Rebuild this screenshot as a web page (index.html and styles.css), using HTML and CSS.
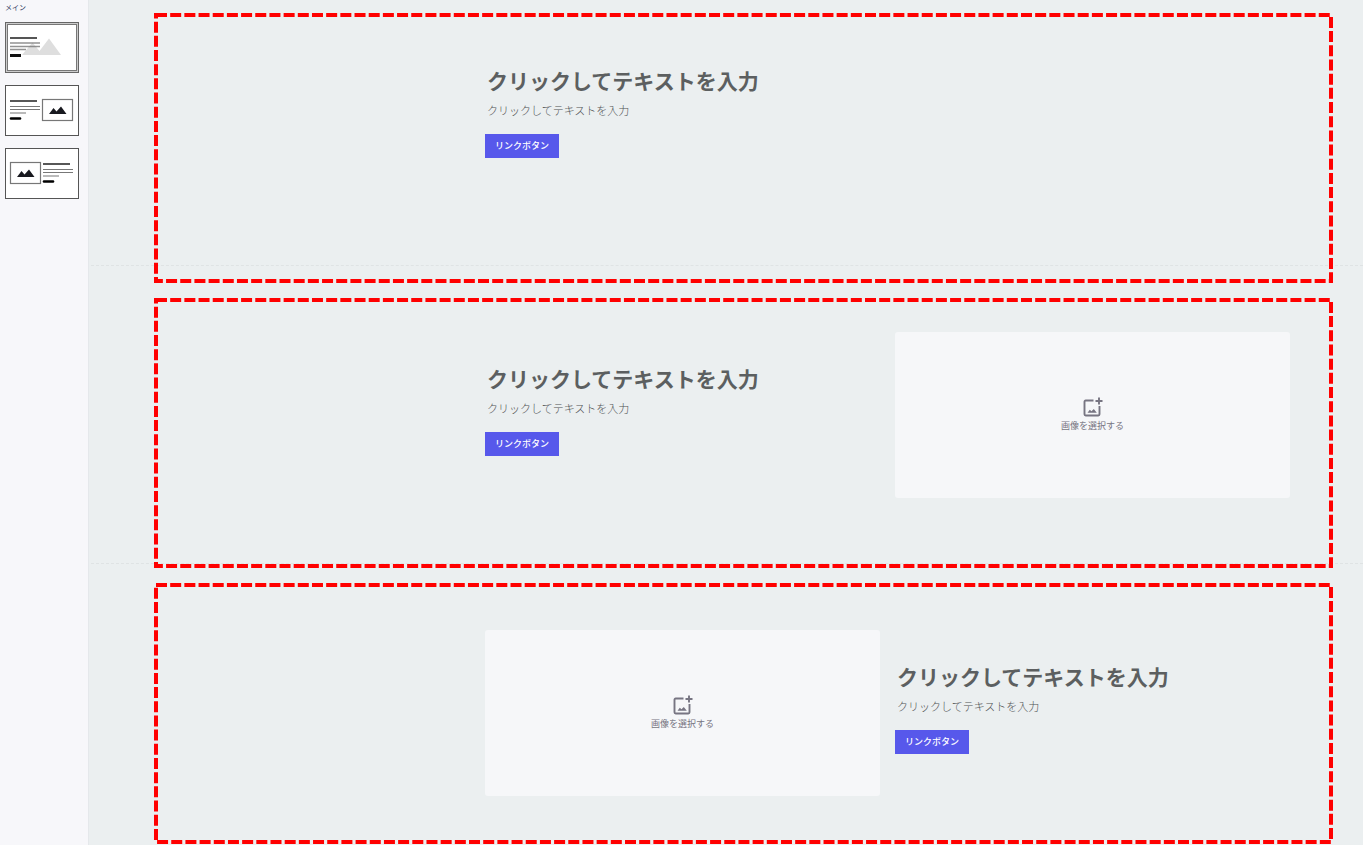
FILE: index.html
```html
<!DOCTYPE html>
<html lang="ja">
<head>
<meta charset="utf-8">
<meta name="viewport" content="width=device-width, initial-scale=1">
<title>メイン</title>
<link rel="stylesheet" href="styles.css">
</head>
<body>
<svg class="defs" aria-hidden="true">
  <symbol id="add-image" viewBox="0 0 20 20">
    <path d="M10.500 3.500H2.700Q1.500 3.500 1.500 4.700V17.300Q1.500 18.500 2.700 18.500H15.300Q16.500 18.500 16.500 17.300V9" fill="none" stroke="currentColor" stroke-width="1.900"/>
    <path d="M16 0.500V7.500M12.500 4H19.500" fill="none" stroke="currentColor" stroke-width="1.900"/>
    <path d="M4.500 15.700L6.800 12.800L8.500 14.300L10.800 12L13.800 15.700Z" fill="currentColor"/>
  </symbol>
</svg>
<div class="app">
  <nav class="sidebar" aria-label="レイアウト">
    <h1 class="sidebar-title">メイン</h1>
    <button class="thumb" type="button" aria-label="背景画像">
      <svg viewBox="0 0 74 51">
        <rect x=".5" y=".5" width="73" height="50" fill="#fff" stroke="#666"/>
        <rect x="1.500" y="1.500" width="71" height="48" fill="none" stroke="#ccc"/>
        <rect x="2.500" y="2.500" width="69" height="46" fill="none" stroke="#777"/>
        <path d="M17 33L27.500 20.500L34.500 29L44 16.500L56 33Z" fill="#dedede"/>
        <path d="M5 16H32" stroke="#555" stroke-width="2"/>
        <path d="M5 21H35M5 24.500H35M5 27.500H21" stroke="#777" stroke-opacity=".8" stroke-width="1.300"/>
        <path d="M5 33.500H16" stroke="#111" stroke-width="3"/>
      </svg>
    </button>
    <button class="thumb" type="button" aria-label="右に画像">
      <svg viewBox="0 0 74 51">
        <rect x=".5" y=".5" width="73" height="50" fill="#fff" stroke="#555"/>
        <path d="M5 16H32" stroke="#444" stroke-width="1.800"/>
        <path d="M5 21.500H35M5 24.500H35M5 28H21" stroke="#777" stroke-width="1.200"/>
        <path d="M6 33.500H15" stroke="#000" stroke-width="2.600" stroke-linecap="round"/>
        <rect x="37.500" y="14.500" width="30" height="21" fill="#fff" stroke="#777" stroke-width="1.200"/>
        <path d="M44 29L48.500 23L51.500 26.500L56 21.500L61.500 29Z" fill="#18191f"/>
      </svg>
    </button>
    <button class="thumb" type="button" aria-label="左に画像">
      <svg viewBox="0 0 74 51">
        <rect x=".5" y=".5" width="73" height="50" fill="#fff" stroke="#555"/>
        <rect x="5.500" y="14.500" width="30" height="21" fill="#fff" stroke="#777" stroke-width="1.200"/>
        <path d="M12 29L16.500 23L19.500 26.500L24 21.500L29.500 29Z" fill="#18191f"/>
        <path d="M38 16H65" stroke="#444" stroke-width="1.800"/>
        <path d="M38 21.500H68M38 24.500H68M38 28H54" stroke="#777" stroke-width="1.200"/>
        <path d="M39 33.500H48" stroke="#000" stroke-width="2.600" stroke-linecap="round"/>
      </svg>
    </button>
  </nav>
  <main class="canvas">
    <section class="block block-first">
      <div class="copy">
        <h2 class="title">クリックしてテキストを入力</h2>
        <p class="text">クリックしてテキストを入力</p>
        <a class="link-button" href="#">リンクボタン</a>
      </div>
    </section>
    <section class="block">
      <div class="copy">
        <h2 class="title">クリックしてテキストを入力</h2>
        <p class="text">クリックしてテキストを入力</p>
        <a class="link-button" href="#">リンクボタン</a>
      </div>
      <button class="picker" type="button"><svg class="picker-icon"><use href="#add-image"/></svg>画像を選択する</button>
    </section>
    <section class="block">
      <button class="picker" type="button"><svg class="picker-icon"><use href="#add-image"/></svg>画像を選択する</button>
      <div class="copy">
        <h2 class="title">クリックしてテキストを入力</h2>
        <p class="text">クリックしてテキストを入力</p>
        <a class="link-button" href="#">リンクボタン</a>
      </div>
    </section>
  </main>
  <svg class="frame frame-1" aria-hidden="true"><rect class="frame-line" x="2" y="2"/></svg>
  <svg class="frame frame-2" aria-hidden="true"><rect class="frame-line" x="2" y="2"/></svg>
  <svg class="frame frame-3" aria-hidden="true"><rect class="frame-line" x="2" y="2"/></svg>
</div>
</body>
</html>
```
FILE: styles.css
```css
* { box-sizing: border-box; }

body {
  margin: 0;
  background: #ebeff0;
  font-family: "Noto Sans CJK JP", sans-serif;
}

.defs { display: none; }

.app {
  position: relative;
  display: flex;
  height: 100vh;
  overflow: hidden;
}

.sidebar {
  flex: 0 0 89px;
  display: flex;
  flex-direction: column;
  gap: 12px;
  padding: 2px 5px;
  background: #f7f7fa;
  border-right: 1px solid #e5e8eb;
}

.sidebar-title {
  margin: 0 0 -2px;
  font-size: 7px;
  line-height: 10px;
  font-weight: 400;
  color: #2f3a5f;
}

.thumb {
  width: 74px;
  height: 51px;
  padding: 0;
  border: 0;
  background: none;
  cursor: pointer;
}

.thumb svg {
  display: block;
  width: 100%;
  height: 100%;
}

.canvas {
  flex: 1;
  min-width: 0;
  padding-left: 2px;
}

.block {
  display: grid;
  grid-template-columns: 1fr 1fr;
  gap: 15px;
  min-height: 298px;
  padding: 66px 73px 65px 394px;
  border-bottom: 1px dashed #dfe3e4;
}

.block-first {
  min-height: 266px;
  padding-top: 34px;
}

.copy { padding-top: 32px; }

.title {
  margin: 0 0 7px;
  padding-left: 2px;
  font-size: 21px;
  line-height: 28px;
  font-weight: 700;
  color: #5c5f60;
  white-space: nowrap;
}

.text {
  margin: 0 0 15px;
  padding-left: 2px;
  font-size: 11px;
  line-height: 18px;
  font-weight: 300;
  color: #505354;
}

.link-button {
  display: block;
  width: fit-content;
  padding: 0 10px;
  background: #5758eb;
  color: #fff;
  font-size: 9px;
  line-height: 24px;
  font-weight: 500;
  text-decoration: none;
}

.picker {
  display: flex;
  flex-direction: column;
  align-items: center;
  justify-content: center;
  gap: 2px;
  height: 166px;
  padding: 0;
  border: 0;
  border-radius: 3px;
  background: #f6f7f9;
  color: #777582;
  font-family: inherit;
  font-size: 9px;
  line-height: 14px;
  cursor: pointer;
}

.picker-icon {
  width: 20px;
  height: 20px;
}

/* Highlight frames drawn over the canvas */
.frame {
  position: absolute;
  left: 154px;
  width: calc(100% - 184px);
  height: 270px;
  pointer-events: none;
}

.frame-1 { top: 13px; }
.frame-2 { top: 298px; }
.frame-3 { top: 583px; height: 261px; }

.frame-line {
  width: calc(100% - 4px);
  height: calc(100% - 4px);
  fill: none;
  stroke: #f00;
  stroke-width: 4px;
  stroke-dasharray: 11 3.18;
}
```
